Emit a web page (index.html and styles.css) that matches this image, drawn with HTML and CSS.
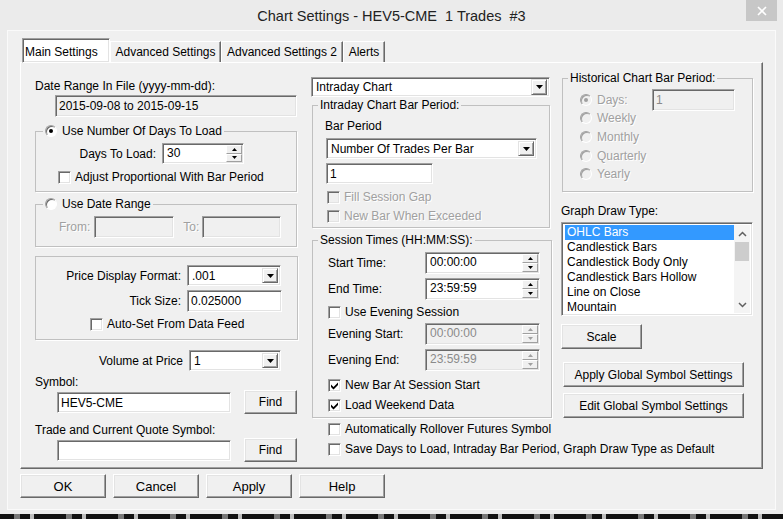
FILE: index.html
```html
<!DOCTYPE html>
<html>
<head>
<meta charset="utf-8">
<link rel="stylesheet" href="styles.css">
</head>
<body>
<div class="window">
  <div class="titlebar">
    <span></span>
    <div class="title">Chart Settings - HEV5-CME&nbsp; 1 Trades&nbsp; #3</div>
    <div class="close"><svg width="10" height="10" viewBox="0 0 10 10"><path d="M1 1L9 9M9 1L1 9" stroke="#fff" stroke-width="1.6"/></svg></div>
  </div>
  <div class="client">
    <div class="tabs">
      <div class="tab sel">Main Settings</div>
      <div class="tab t2">Advanced Settings</div>
      <div class="tab t3">Advanced Settings 2</div>
      <div class="tab t4">Alerts</div>
    </div>
    <div class="panel">
      <!-- LEFT COLUMN -->
      <div class="col left">
        <div class="lbl l-date">Date Range In File (yyyy-mm-dd):</div>
        <div class="tb ro w-range">2015-09-08 to 2015-09-15</div>
        <fieldset class="grp g-days">
          <legend class="lg-radio"><span class="rb on"></span>Use Number Of Days To Load</legend>
          <div class="row r-dtl"><span class="rl w-dtl">Days To Load:</span>
            <div class="spin w-dspin"><span class="val">30</span><span class="sbtns"><span class="sb"><svg width="5" height="3" viewBox="0 0 5 3"><path d="M2.5 0L5 3H0z"/></svg></span><span class="sb"><svg width="5" height="3" viewBox="0 0 5 3"><path d="M0 0h5L2.5 3z"/></svg></span></span></div>
          </div>
          <div class="row chk r-adj"><span class="cb"></span>Adjust Proportional With Bar Period</div>
        </fieldset>
        <fieldset class="grp g-range">
          <legend class="lg-radio"><span class="rb"></span>Use Date Range</legend>
          <div class="row r-from"><span class="dis">From:</span><div class="tb dtb w-from"></div><span class="dis l-to">To:</span><div class="tb dtb w-to"></div></div>
        </fieldset>
        <fieldset class="grp g-price">
          <div class="row r-pdf"><span class="rl w-pl">Price Display Format:</span><div class="sel w-pdf"><span class="val">.001</span><span class="dd"><svg width="7" height="4" viewBox="0 0 7 4"><path d="M0 0h7L3.5 4z"/></svg></span></div></div>
          <div class="row r-tick"><span class="rl w-pl">Tick Size:</span><div class="tb w-tick">0.025000</div></div>
          <div class="row chk r-auto"><span class="cb"></span>Auto-Set From Data Feed</div>
        </fieldset>
        <div class="row r-vap"><span class="rl w-vl">Volume at Price</span><div class="sel w-vap"><span class="val">1</span><span class="dd"><svg width="7" height="4" viewBox="0 0 7 4"><path d="M0 0h7L3.5 4z"/></svg></span></div></div>
        <div class="lbl l-sym">Symbol:</div>
        <div class="row r-sym"><div class="tb w-sym">HEV5-CME</div><div class="btn w-find">Find</div></div>
        <div class="lbl l-trade">Trade and Current Quote Symbol:</div>
        <div class="row r-sym"><div class="tb w-sym"></div><div class="btn w-find">Find</div></div>
      </div>

      <!-- MIDDLE COLUMN -->
      <div class="col mid">
        <div class="sel w-chart"><span class="val">Intraday Chart</span><span class="dd"><svg width="7" height="4" viewBox="0 0 7 4"><path d="M0 0h7L3.5 4z"/></svg></span></div>
        <fieldset class="grp g-intra">
          <legend class="lg-text">Intraday Chart Bar Period:</legend>
          <div class="lbl l-bp">Bar Period</div>
          <div class="sel w-bp"><span class="val">Number Of Trades Per Bar</span><span class="dd"><svg width="7" height="4" viewBox="0 0 7 4"><path d="M0 0h7L3.5 4z"/></svg></span></div>
          <div class="tb w-one">1</div>
          <div class="row chk r-fill dis"><span class="cb off"></span>Fill Session Gap</div>
          <div class="row chk r-nbwe dis"><span class="cb off"></span>New Bar When Exceeded</div>
        </fieldset>
        <fieldset class="grp g-sess">
          <legend class="lg-text">Session Times (HH:MM:SS):</legend>
          <div class="row r-st"><span class="tl">Start Time:</span>
            <div class="spin w-tspin"><span class="val">00:00:00</span><span class="sbtns"><span class="sb"><svg width="5" height="3" viewBox="0 0 5 3"><path d="M2.5 0L5 3H0z"/></svg></span><span class="sb"><svg width="5" height="3" viewBox="0 0 5 3"><path d="M0 0h5L2.5 3z"/></svg></span></span></div>
          </div>
          <div class="row r-et"><span class="tl">End Time:</span>
            <div class="spin w-tspin"><span class="val">23:59:59</span><span class="sbtns"><span class="sb"><svg width="5" height="3" viewBox="0 0 5 3"><path d="M2.5 0L5 3H0z"/></svg></span><span class="sb"><svg width="5" height="3" viewBox="0 0 5 3"><path d="M0 0h5L2.5 3z"/></svg></span></span></div>
          </div>
          <div class="row chk r-ues"><span class="cb"></span>Use Evening Session</div>
          <div class="row r-es"><span class="tl">Evening Start:</span>
            <div class="spin w-tspin off"><span class="val">00:00:00</span><span class="sbtns"><span class="sb"><svg width="5" height="3" viewBox="0 0 5 3"><path d="M2.5 0L5 3H0z"/></svg></span><span class="sb"><svg width="5" height="3" viewBox="0 0 5 3"><path d="M0 0h5L2.5 3z"/></svg></span></span></div>
          </div>
          <div class="row r-ee"><span class="tl">Evening End:</span>
            <div class="spin w-tspin off"><span class="val">23:59:59</span><span class="sbtns"><span class="sb"><svg width="5" height="3" viewBox="0 0 5 3"><path d="M2.5 0L5 3H0z"/></svg></span><span class="sb"><svg width="5" height="3" viewBox="0 0 5 3"><path d="M0 0h5L2.5 3z"/></svg></span></span></div>
          </div>
          <div class="row chk r-nbss"><span class="cb"><svg width="9" height="9" viewBox="0 0 9 9"><path d="M1 3.5L3.5 6 8 1.5V4L3.5 8.5 1 6z"/></svg></span>New Bar At Session Start</div>
          <div class="row chk r-lwd"><span class="cb"><svg width="9" height="9" viewBox="0 0 9 9"><path d="M1 3.5L3.5 6 8 1.5V4L3.5 8.5 1 6z"/></svg></span>Load Weekend Data</div>
        </fieldset>
        <div class="row chk r-roll"><span class="cb"></span>Automatically Rollover Futures Symbol</div>
        <div class="row chk r-save"><span class="cb"></span>Save Days to Load, Intraday Bar Period, Graph Draw Type as Default</div>
      </div>

      <!-- RIGHT COLUMN -->
      <div class="col right">
        <fieldset class="grp g-hist">
          <legend class="lg-text">Historical Chart Bar Period:</legend>
          <div class="row r-days"><span class="rlab dis"><span class="rb on off"></span>Days:</span><div class="tb dtb w-days">1</div></div>
          <div class="row rr r-wk dis"><span class="rb off"></span>Weekly</div>
          <div class="row rr r-mo dis"><span class="rb off"></span>Monthly</div>
          <div class="row rr r-qt dis"><span class="rb off"></span>Quarterly</div>
          <div class="row rr r-yr dis"><span class="rb off"></span>Yearly</div>
        </fieldset>
        <div class="lbl l-gdt">Graph Draw Type:</div>
        <div class="list">
          <div class="items">
            <div class="it selit">OHLC Bars</div>
            <div class="it">Candlestick Bars</div>
            <div class="it">Candlestick Body Only</div>
            <div class="it">Candlestick Bars Hollow</div>
            <div class="it">Line on Close</div>
            <div class="it">Mountain</div>
          </div>
          <div class="sbar">
            <span class="arr"><svg width="9" height="6" viewBox="0 0 9 6"><path d="M1 5L4.5 1.5 8 5" fill="none" stroke="#606060" stroke-width="1.5"/></svg></span>
            <span class="thumb"></span>
            <span class="track"></span>
            <span class="arr"><svg width="9" height="6" viewBox="0 0 9 6"><path d="M1 1L4.5 4.5 8 1" fill="none" stroke="#606060" stroke-width="1.5"/></svg></span>
          </div>
        </div>
        <div class="btn w-scale">Scale</div>
        <div class="btn w-glob b-apply">Apply Global Symbol Settings</div>
        <div class="btn w-glob b-edit">Edit Global Symbol Settings</div>
      </div>
    </div>
    <div class="buttons">
      <div class="btn bb">OK</div>
      <div class="btn bb">Cancel</div>
      <div class="btn bb">Apply</div>
      <div class="btn bb">Help</div>
    </div>
  </div>
</div>
<div class="desk"></div>
</body>
</html>
```

FILE: styles.css
```css
* { box-sizing: border-box; }
html, body { margin: 0; padding: 0; }
body {
  width: 783px; height: 519px; overflow: hidden;
  background: #ebebeb;
  font-family: "Liberation Sans", Arial, sans-serif;
  font-size: 12px; color: #000;
}
.window { width: 783px; height: 514px; background: #ebebeb; display: flex; flex-direction: column; }
.titlebar { height: 30px; display: grid; grid-template-columns: 1fr auto 1fr; }
.title {
  font-family: "Liberation Sans", Arial, sans-serif;
  font-size: 14.5px; line-height: 33px; color: #222; white-space: nowrap;
}
.close {
  justify-self: end; width: 31px; height: 21px; margin-right: 6px;
  background: #c7c7c7; display: flex; align-items: center; justify-content: center;
}
.client {
  margin: 0 7px; height: 480px; background: #f0f0f0;
  border: 1px solid #fafafa;
}
.desk {
  height: 5px;
  background: repeating-linear-gradient(90deg, #111 0 14px, #777 14px 20px, #111 20px 30px, #bbb 30px 34px, #111 34px 52px);
}

/* tabs */
.tabs { display: flex; align-items: flex-end; height: 25px; margin-top: 7px; padding-left: 14px; }
.tab {
  font-size: 12px; height: 22px; line-height: 20px; text-align: center;
  border-top: 1px solid #fff; border-left: 1px solid #fff;
  border-right: 1px solid #696969;
  box-shadow: inset -1px 0 0 #a0a0a0;
  background: #f0f0f0; white-space: nowrap;
}
.tab.sel { width: 88px; height: 25px; line-height: 22px; position: relative; z-index: 2; }
.tab.t2 { width: 111px; }
.tab.t3 { width: 122px; }
.tab.t4 { width: 42px; }

.panel {
  margin-top: -1px; margin-left: 12px; width: 743px; height: 407px;
  border: 1px solid; border-color: #fff #696969 #696969 #fff;
  box-shadow: inset -1px -1px 0 #a0a0a0;
  padding: 14px 0 0 14px;
  display: flex; align-items: flex-start;
  position: relative; z-index: 1;
}
.col { display: flex; flex-direction: column; align-items: flex-start; }
.left { width: 262px; }
.mid { width: 240px; margin-left: 14px; }
.right { width: 192px; margin-left: 10px; }

.lbl { line-height: 16px; height: 16px; white-space: nowrap; }
.row { display: flex; align-items: center; white-space: nowrap; }
.chk { height: 14px; }
.dis { color: #a0a0a0; text-shadow: 1px 1px 0 #fff; }

/* group boxes */
.grp {
  margin: 0; padding: 0; min-width: 0;
  border: 1px solid #c0c0c0;
  box-shadow: 1px 1px 0 #fff;
}
legend { padding: 0 2px; line-height: 16px; height: 16px; margin-left: 5px; white-space: nowrap; }
.lg-radio { margin-left: 7px; display: flex; align-items: center; }

/* inputs */
.tb, .sel, .spin, .list {
  border: 1px solid; border-color: #a0a0a0 #fff #fff #a0a0a0;
  box-shadow: inset 1px 1px 0 #696969, inset -1px -1px 0 #e3e3e3;
  background: #fff;
}
.tb { height: 22px; line-height: 20px; padding-left: 3px; white-space: nowrap; }
.tb.ro, .tb.dtb { background: #f0f0f0; }
.tb.dtb { color: #8a8a8a; }
.sel { height: 21px; display: flex; align-items: stretch; padding: 2px; }
.sel .val { flex: 1; line-height: 17px; padding-left: 2px; white-space: nowrap; }
.dd {
  width: 16px; display: flex; align-items: center; justify-content: center;
  background: #f0f0f0;
  border: 1px solid; border-color: #e3e3e3 #696969 #696969 #e3e3e3;
  box-shadow: inset 1px 1px 0 #fff, inset -1px -1px 0 #a0a0a0;
}
.spin { height: 21px; display: flex; padding: 1px; }
.spin .val { flex: 1; line-height: 17px; padding-left: 3px; }
.sbtns { width: 16px; display: flex; flex-direction: column; }
.sb {
  flex: 1; display: flex; align-items: center; justify-content: center;
  background: #f0f0f0;
  border: 1px solid; border-color: #fff #a0a0a0 #a0a0a0 #fff;
}
.sb svg { display: block; }
.spin.off { background: #f0f0f0; }
.spin.off .val { color: #8a8a8a; }
.spin.off svg { fill: #a0a0a0; }

.btn {
  height: 24px; display: flex; align-items: center; justify-content: center;
  background: #f0f0f0; white-space: nowrap;
  border: 1px solid; border-color: #fff #696969 #696969 #fff;
  box-shadow: inset -1px -1px 0 #a0a0a0, inset 1px 1px 0 #e3e3e3;
}

/* checkbox & radio */
.cb {
  width: 13px; height: 13px; flex: none; margin-right: 4px; background: #fff;
  border: 1px solid; border-color: #a0a0a0 #fff #fff #a0a0a0;
  box-shadow: inset 1px 1px 0 #696969, inset -1px -1px 0 #e3e3e3;
  display: flex; align-items: center; justify-content: center;
}
.cb.off { background: #f0f0f0; }
.cb svg { display: block; }
.rb {
  width: 12px; height: 12px; flex: none; margin-right: 5px; border-radius: 50%;
  background: #fff;
  border: 1px solid; border-color: #a0a0a0 #fff #fff #a0a0a0;
  box-shadow: inset 1px 1px 0 #696969;
  display: flex; align-items: center; justify-content: center;
}
.rb.on::after { content: ""; width: 4px; height: 4px; border-radius: 50%; background: #000; }
.rb.off { background: #f0f0f0; box-shadow: inset 1px 1px 0 #a0a0a0; }
.rb.on.off::after { background: #a0a0a0; }

/* left column positions */
.l-date { margin-top: 1px; }
.w-range { margin-top: 1px; margin-left: 20px; width: 242px; }
.g-days { margin-top: 6px; width: 262px; padding-bottom: 7px; }
.r-dtl { margin-top: 4px; }
.w-dtl { width: 120px; text-align: right; margin-right: 6px; }
.w-dspin { width: 82px; }
.r-adj { margin-top: 6px; padding-left: 22px; }
.g-range { margin-top: 4px; width: 262px; padding-bottom: 8px; }
.r-from { margin-top: 4px; padding-left: 23px; }
.w-from { width: 80px; margin-left: 4px; }
.l-to { margin-left: 9px; }
.w-to { width: 79px; margin-left: 3px; }
.g-price { margin-top: 9px; width: 263px; padding: 8px 0 8px 0; }
.w-pl { width: 145px; text-align: right; margin-right: 6px; }
.w-pdf { width: 94px; }
.r-tick { margin-top: 4px; }
.w-tick { width: 95px; }
.r-auto { margin-top: 5px; padding-left: 54px; }
.r-vap { margin-top: 10px; }
.w-vl { width: 148px; text-align: right; margin-right: 6px; }
.w-vap { width: 92px; }
.l-sym { margin-top: 3px; }
.r-sym { height: 24px; }
.w-sym { width: 174px; height: 21px; margin-left: 22px; }
.w-find { width: 53px; margin-left: 13px; }
.l-trade { margin-top: 8px; }

/* middle column */
.w-chart { width: 239px; height: 20px; padding-top: 1px; padding-bottom: 1px; }
.g-intra { width: 238px; margin-left: 1px; padding-bottom: 4px; }
.l-bp { margin-top: 5px; margin-left: 12px; }
.w-bp { width: 211px; margin-top: 4px; margin-left: 13px; }
.w-one { width: 107px; height: 21px; margin-top: 4px; margin-left: 13px; }
.r-fill { margin-top: 6px; padding-left: 14px; }
.r-nbwe { margin-top: 5px; padding-left: 14px; }
.g-sess { width: 240px; margin-left: 1px; margin-top: 4px; padding-bottom: 5px; }
.tl { width: 97px; padding-left: 15px; box-sizing: content-box; }
.w-tspin { width: 115px; height: 22px; }
.r-st { margin-top: 4px; }
.r-et { margin-top: 4px; }
.r-ues { margin-top: 5px; padding-left: 15px; }
.r-es { margin-top: 4px; }
.r-ee { margin-top: 4px; }
.r-nbss { margin-top: 7px; padding-left: 15px; }
.r-lwd { margin-top: 6px; padding-left: 15px; }
.r-roll { margin-top: 4px; padding-left: 17px; }
.r-save { margin-top: 6px; padding-left: 17px; }

/* right column */
.g-hist { width: 191px; margin-left: 1px; margin-top: -7px; padding-bottom: 10px; }
.r-days { margin-top: 3px; padding-left: 17px; height: 22px; }
.rlab { width: 72px; display: flex; align-items: center; }
.w-days { width: 83px; }
.rr { height: 14px; padding-left: 17px; }
.r-wk { margin-top: 0; }
.r-mo { margin-top: 5px; }
.r-qt { margin-top: 5px; }
.r-yr { margin-top: 4px; }
.l-gdt { margin-top: 11px; }
.list { margin-top: 3px; width: 192px; height: 94px; display: flex; padding: 2px; }
.items { flex: 1; padding-left: 1px; }
.it { height: 15px; line-height: 15px; padding-left: 2px; white-space: nowrap; }
.selit { background: #3399ff; color: #fff; }
.sbar { width: 16px; display: flex; flex-direction: column; background: #f4f4f4; }
.arr { height: 17px; display: flex; align-items: center; justify-content: center; }
.thumb { height: 19px; margin: 0 1px; background: #cdcdcd; }
.track { flex: 1; }
.w-scale { width: 81px; height: 25px; margin-top: 8px; }
.w-glob { width: 181px; height: 25px; margin-left: 2px; }
.b-apply { margin-top: 13px; }
.b-edit { margin-top: 6px; }

/* bottom buttons */
.buttons { display: flex; gap: 7px; margin-top: 5px; margin-left: 12px; }
.bb { width: 86px; height: 24px; font-size: 13px; }
```
